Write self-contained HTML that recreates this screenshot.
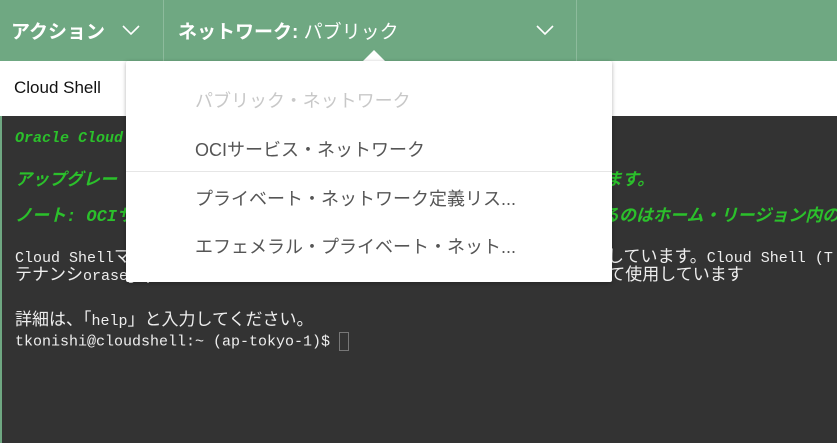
<!DOCTYPE html>
<html><head><meta charset="utf-8"><style>
body{margin:0;width:837px;height:443px;overflow:hidden;background:#333;font-family:"Liberation Sans","Noto Sans CJK JP",sans-serif;position:relative}
.hdr{position:absolute;left:0;top:0;width:837px;height:61px;background:#6fa882}
.sep{position:absolute;top:0;width:1px;height:61px;background:#8dbb9c}
.ht{position:absolute;top:17px;color:#fff;font-size:19px}
.chev{position:absolute;top:24px}
.bar{position:absolute;left:0;top:61px;width:837px;height:55px;background:#fff}
.term{position:absolute;left:0;top:116px;width:835px;height:327px;background:#333;border-left:2px solid #6fa882}
.t{position:absolute;left:13px;font-family:"Liberation Mono","Noto Sans CJK JP",monospace;font-size:15px;white-space:nowrap;color:#eee;line-height:18px}
.t .j{font-size:17px}
.g{color:#2bc02b;font-weight:bold;font-style:italic}
.dd{position:absolute;left:126px;top:61px;width:486px;height:221px;background:#fff;box-shadow:0 1px 4px rgba(0,0,0,.3);border-radius:2px}
.it{position:absolute;left:69px;font-size:18px;color:#555}
.arrow{position:absolute;left:363px;top:50px;width:0;height:0;border-left:11px solid transparent;border-right:11px solid transparent;border-bottom:11px solid #fff}
</style></head><body>
<div class="hdr">
<div class="ht" style="left:11px;font-weight:bold">アクション</div>
<svg class="chev" style="left:122px" width="18" height="12"><path d="M1 2 L9 10 L17 2" stroke="#fff" stroke-width="1.6" fill="none"/></svg>
<div class="sep" style="left:163px"></div>
<div class="ht" style="left:178px"><b>ネットワーク:</b> パブリック</div>
<svg class="chev" style="left:536px" width="18" height="12"><path d="M1 2 L9 10 L17 2" stroke="#fff" stroke-width="1.6" fill="none"/></svg>
<div class="sep" style="left:576px"></div>
</div>
<div class="bar"><div style="position:absolute;left:14px;top:17px;font-size:17px;color:#111">Cloud Shell</div></div>
<div class="term">
<div class="t g" style="top:14px">Oracle Cloud</div>
<div class="t g" style="top:57px;left:603px"><span class="j">ます。</span></div>
<div class="t g" style="top:57px"><span class="j">アップグレー</span></div>
<div class="t g" style="top:93px"><span class="j">ノート: OCIサ</span></div>
<div class="t g" style="top:93px;left:600px"><span class="j">るのはホーム・リージョン内の</span></div>
<div class="t" style="top:134px">Cloud Shell<span class="j">マ</span></div>
<div class="t" style="top:134px;left:605px"><span class="j">しています。</span>Cloud Shell (T</div>
<div class="t" style="top:152px"><span class="j">テナンシ</span>orasejapan<span class="j">の</span>Cloud Shell<span class="j">を</span>oci<span class="j">のローカル・ユーザー</span>tkonishi<span class="j">として使用しています</span></div>
<div class="t" style="top:197px"><span class="j">詳細は、「</span>help<span class="j">」と入力してください。</span></div>
<div class="t" style="top:216px">tkonishi@cloudshell:~ (ap-tokyo-1)$ <span style="display:inline-block;width:8px;height:17px;border:1px solid #777;vertical-align:middle"></span></div>
</div>
<div class="arrow"></div>
<div class="dd">
<div class="it" style="top:26px;color:#c8c8c8">パブリック・ネットワーク</div>
<div class="it" style="top:75px">OCIサービス・ネットワーク</div>
<div style="position:absolute;left:0;top:110px;width:486px;height:1px;background:#e6e6e6"></div>
<div class="it" style="top:124px">プライベート・ネットワーク定義リス...</div>
<div class="it" style="top:172px">エフェメラル・プライベート・ネット...</div>
</div>
</body></html>
